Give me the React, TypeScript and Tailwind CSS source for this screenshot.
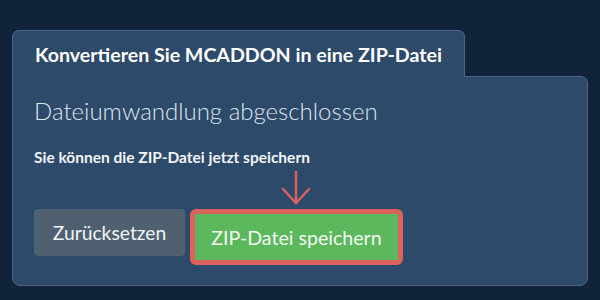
export default function App() {
  return (
    <div className="w-[600px] h-[300px] bg-[#11233a] pt-[30px] pl-[12px] font-['Lato','Liberation_Sans',sans-serif] overflow-hidden">
      <div className="relative z-10 -mb-px inline-block h-[47px] rounded-t-[7px] border border-b-0 border-[#4c6585] bg-[#2d4a6a] pl-[22px] pr-[22px] pt-[12px]">
        <h1 className="text-[19.6px] font-bold leading-[1.2] text-white whitespace-nowrap">
          Konvertieren Sie MCADDON in eine ZIP-Datei
        </h1>
      </div>
      <div className="w-[576px] rounded-tr-[7px] rounded-b-[8px] border border-[#4c6585] bg-[#2d4a6a] pl-[21px] pt-[20px] pb-[20px]">
        <h2 className="text-[24px] font-light leading-[1.2] text-[#dfe5ec] whitespace-nowrap">Dateiumwandlung abgeschlossen</h2>
        <p className="mt-[22px] text-[15.5px] font-bold leading-[1.2] text-[#f2f4f6] whitespace-nowrap">
          Sie können die ZIP-Datei jetzt speichern
        </p>
        <div className="mt-[43px] flex items-start gap-[5px]">
          <button className="h-[47px] w-[151px] rounded-[4px] bg-[#4f6071] text-[19.3px] leading-[1.2] text-[#f2f4f6]">
            Zurücksetzen
          </button>
          <div className="relative rounded-[6px] border-[5px] border-[#dc625d]">
            <svg
              className="absolute left-[85px] top-[-44px]"
              width="32"
              height="36"
              viewBox="0 0 32 36"
              fill="none"
              stroke="#dc625d"
              strokeWidth="2.5"
              strokeLinecap="round"
            >
              <path d="M16 2 V33" />
              <path d="M3 19 L16 33 L29 19" />
            </svg>
            <button className="block h-[46px] w-[203px] bg-[#5cb85c] text-[19.6px] leading-[1.2] text-[#f4f8f4]">
              ZIP-Datei speichern
            </button>
          </div>
        </div>
      </div>
    </div>
  );
}
